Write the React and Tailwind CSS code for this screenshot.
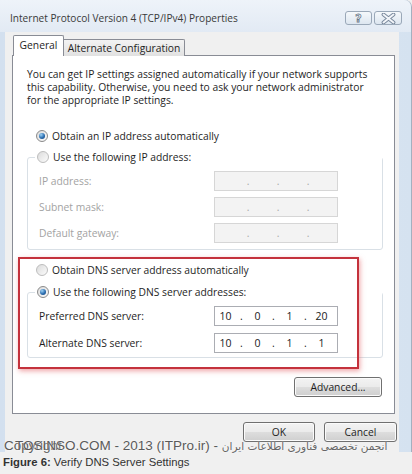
import React from 'react';

const Radio = ({ checked, dim }) => (
  <span
    className={`w-[12px] h-[12px] rounded-full border shrink-0 flex items-center justify-center bg-gradient-to-br from-[#dcdcdc] to-[#fbfbfb] ${
      dim ? 'border-[#bdbdbd]' : 'border-[#8a8a8a]'
    }`}
  >
    {checked && (
      <span className="w-[6px] h-[6px] rounded-full bg-[radial-gradient(circle_at_35%_30%,#9fd3f5,#2a6db0_55%,#143f73)]" />
    )}
  </span>
);

const RadioRow = ({ checked, dim, children, onBorder }) => (
  <div className={`flex items-center h-[14px] ${onBorder ? '-mt-[8px] ml-[7px] self-start bg-white pl-[2px] pr-[3px]' : 'ml-[9px]'}`}>
    <Radio checked={checked} dim={dim} />
    <span className="ml-[4px] text-[#1e1e1e] whitespace-nowrap">{children}</span>
  </div>
);

// disabled IP control: empty fields, dots only
const IpBoxEmpty = () => (
  <div className="w-[124px] h-[20px] border border-[#d6d6d6] bg-[#f3f3f3] grid grid-cols-[30px_6px_24px_6px_24px_6px_28px] items-center text-[#a8a8a8] leading-none">
    <span />
    <span className="text-center">.</span>
    <span />
    <span className="text-center">.</span>
    <span />
    <span className="text-center">.</span>
    <span />
  </div>
);

const IpBox = ({ parts }) => (
  <div className="w-[124px] h-[20px] border border-[#abadb3] bg-white flex items-center pl-[2px] text-[#1a1a1a] text-[10.5px]">
    {parts.map((p, i) => (
      <React.Fragment key={i}>
        {i > 0 && <span className="w-[15px] text-center">.</span>}
        <span className="w-[17px] text-center">{p}</span>
      </React.Fragment>
    ))}
  </div>
);

const Field = ({ label, disabled, parts }) => (
  <div className="flex items-center h-[20px]">
    <span className={`w-[175px] ${disabled ? 'text-[#a3a3a3]' : 'text-[#1e1e1e]'}`}>{label}</span>
    {disabled ? <IpBoxEmpty /> : <IpBox parts={parts} />}
  </div>
);

const WinButton = ({ children, className = '' }) => (
  <div
    className={`h-[20px] rounded-[3px] border border-[#707070] bg-[linear-gradient(#f3f3f3_0%,#ebebeb_48%,#dddddd_52%,#cfcfcf_100%)] shadow-[inset_0_0_0_1px_#fbfbfb] flex items-center justify-center text-[#1e1e1e] ${className}`}
  >
    {children}
  </div>
);

export default function App() {
  return (
    <div className="relative w-[412px] h-[474px] overflow-hidden bg-[#f0f0f0] font-['Open_Sans',sans-serif] text-[10.3px] leading-[13px]">
      {/* window */}
      <div className="h-[452px] flex flex-col bg-[linear-gradient(90deg,#d3e0ef,#dfe9f5_40%,#d5e2f0)] border-r border-[#a3b0bf] rounded-tr-[7px]">
        {/* title bar */}
        <div className="h-[32px] flex items-start pt-[11px] pl-[10px] pr-[9px] bg-[linear-gradient(#eef3f9,#e2eaf4)] rounded-tr-[7px]">
          <span className="text-[#3a3a3a] text-[10.1px] leading-[14px] whitespace-nowrap">
            Internet Protocol Version 4 (TCP/IPv4) Properties
          </span>
          <div className="ml-auto flex gap-[2px]">
            <div className="w-[27px] h-[14px] rounded-[3px] border border-[#9aa8b8] bg-[linear-gradient(#f5f8fb,#dde6f0)] flex items-center justify-center">
              <span className="font-['DejaVu_Sans',sans-serif] font-bold text-[11px] leading-none text-[#f4f7fa] [-webkit-text-stroke:0.8px_#6e7c8c]">?</span>
            </div>
            <div className="w-[28px] h-[14px] rounded-[3px] border border-[#9aa8b8] bg-[linear-gradient(#f5f8fb,#dde6f0)] flex items-center justify-center">
              <svg width="15" height="11" viewBox="0 0 15 11">
                <path d="M2.5 1.5 L12.5 9.5 M12.5 1.5 L2.5 9.5" stroke="#76869a" strokeWidth="3.8" strokeLinecap="round" />
                <path d="M2.5 1.5 L12.5 9.5 M12.5 1.5 L2.5 9.5" stroke="#f2f5f9" strokeWidth="2" strokeLinecap="round" />
              </svg>
            </div>
          </div>
        </div>

        {/* body */}
        <div className="flex-1 ml-[5px] mr-[12px] bg-[#f0f0f0] pt-[3px] flex flex-col">
          {/* tabs */}
          <div className="flex items-end ml-[8px] h-[21px] relative z-10">
            <div className="w-[51px] h-[21px] bg-white border border-b-0 border-[#898c95] rounded-t-[2px] flex items-center justify-center pb-[1px] text-[#1e1e1e]">
              General
            </div>
            <div className="w-[121px] h-[17px] bg-[linear-gradient(#f3f3f3,#e1e1e1)] border border-l-0 border-b-0 border-[#898c95] rounded-tr-[2px] flex items-center justify-center text-[#1e1e1e]">
              Alternate Configuration
            </div>
          </div>

          {/* tab panel */}
          <div className="relative ml-[7px] mr-[4px] -mt-[1px] h-[359px] bg-white border border-[#898c95] pl-[14px] pr-[11px] flex flex-col text-[#1e1e1e]">
            <div className="mt-[12px]">
              <div>You can get IP settings assigned automatically if your network supports</div>
              <div>this capability. Otherwise, you need to ask your network administrator</div>
              <div>for the appropriate IP settings.</div>
            </div>

            <div className="mt-[22px]">
              <RadioRow checked>Obtain an IP address automatically</RadioRow>
            </div>

            <div className="mt-[14px] border border-[#d9e0e6] rounded-[3px] flex flex-col pl-[11px] pb-[6px]">
              <div className="-ml-[11px]">
                <RadioRow dim onBorder>Use the following IP address:</RadioRow>
              </div>
              <div className="mt-[7px] flex flex-col gap-[6px]">
                <Field label="IP address:" disabled />
                <Field label="Subnet mask:" disabled />
                <Field label="Default gateway:" disabled />
              </div>
            </div>

            <div className="mt-[13px]">
              <RadioRow dim>Obtain DNS server address automatically</RadioRow>
            </div>

            <div className="mt-[15px] border border-[#d9e0e6] rounded-[3px] flex flex-col pl-[11px] pb-[4px]">
              <div className="-ml-[11px]">
                <RadioRow checked onBorder>Use the following DNS server addresses:</RadioRow>
              </div>
              <div className="mt-[7px] flex flex-col gap-[7px]">
                <Field label="Preferred DNS server:" parts={['10', '0', '1', '20']} />
                <Field label="Alternate DNS server:" parts={['10', '0', '1', '1']} />
              </div>
            </div>

            <div className="mt-[19px] flex justify-end pr-[1px]">
              <WinButton className="w-[88px]">Advanced...</WinButton>
            </div>

            {/* red annotation frame */}
            <div className="absolute left-[5px] top-[201px] w-[341px] h-[112px] border-[2px] border-[#c4323c] shadow-[1px_2px_5px_rgba(225,90,95,0.55)] pointer-events-none" />
          </div>

          {/* dialog buttons */}
          <div className="mt-[8px] flex justify-end gap-[9px] pr-[2px]">
            <WinButton className="w-[72px]">OK</WinButton>
            <WinButton className="w-[73px]">Cancel</WinButton>
          </div>
        </div>
      </div>

      {/* watermark over the bottom of the dialog */}
      <div className="absolute left-[4px] top-[439px] flex items-baseline whitespace-nowrap font-['Liberation_Sans',sans-serif] text-[13.5px] leading-[14px] text-[#5a5a5a] [text-shadow:0_0_2px_#ffffff]">
        <span className="inline-grid">
          <span className="col-start-1 row-start-1">Copyright</span>
          <span className="col-start-1 row-start-1 pl-[11px]">TOSINSO.COM</span>
        </span>
        <span>&nbsp;- 2013 (ITPro.ir) -&nbsp;</span>
        <span dir="rtl" className="font-['DejaVu_Sans',sans-serif] text-[10.5px] text-[#666666]">انجمن تخصصی فناوری اطلاعات ایران</span>
      </div>

      {/* caption */}
      <div className="pl-[3px] pt-[3px] font-['Liberation_Sans',sans-serif] text-[11.3px] leading-[14px] text-[#333333] whitespace-nowrap">
        <span className="font-bold">Figure 6:</span> Verify DNS Server Settings
      </div>
    </div>
  );
}
